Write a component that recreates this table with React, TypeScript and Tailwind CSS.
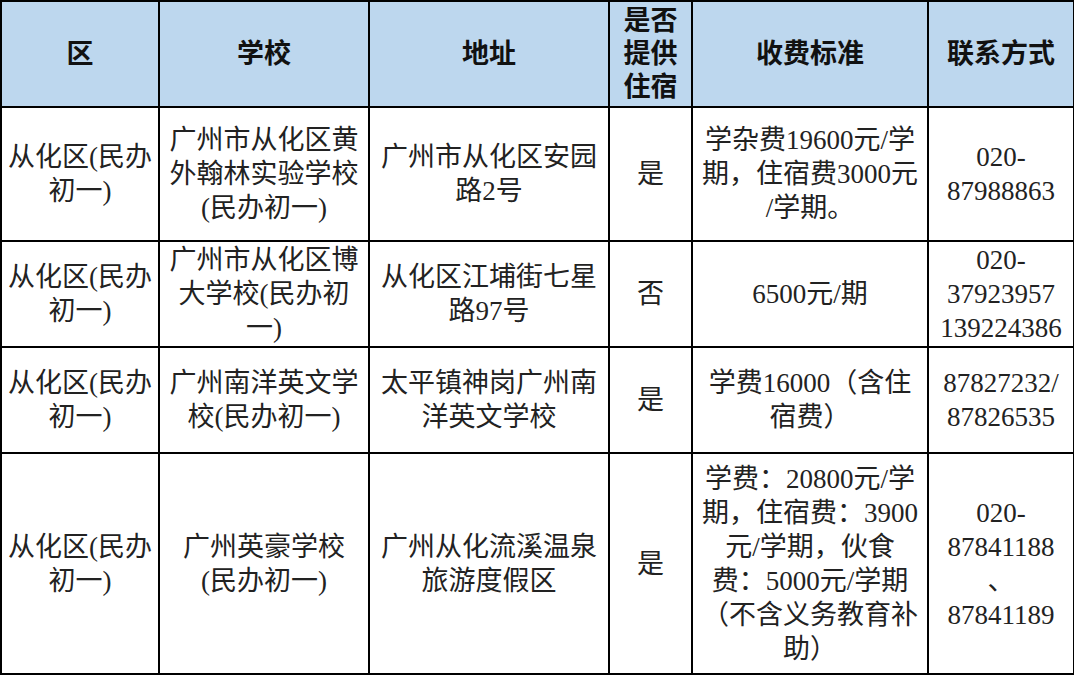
import React from 'react'

// each cell is a list of lines, broken the same way as the spreadsheet shot
type Row = { h: string; cells: string[][] }

const headers: string[][] = [
  ['区'],
  ['学校'],
  ['地址'],
  ['是否', '提供', '住宿'],
  ['收费标准'],
  ['联系方式'],
]

const rows: Row[] = [
  {
    h: 'h-[134px]',
    cells: [
      ['从化区(民办', '初一)'],
      ['广州市从化区黄', '外翰林实验学校', '(民办初一)'],
      ['广州市从化区安园', '路2号'],
      ['是'],
      ['学杂费19600元/学', '期，住宿费3000元', '/学期。'],
      ['020-', '87988863'],
    ],
  },
  {
    h: 'h-[106px]',
    cells: [
      ['从化区(民办', '初一)'],
      ['广州市从化区博', '大学校(民办初', '一)'],
      ['从化区江埔街七星', '路97号'],
      ['否'],
      ['6500元/期'],
      ['020-', '37923957', '139224386'],
    ],
  },
  {
    h: 'h-[106px]',
    cells: [
      ['从化区(民办', '初一)'],
      ['广州南洋英文学', '校(民办初一)'],
      ['太平镇神岗广州南', '洋英文学校'],
      ['是'],
      ['学费16000（含住', '宿费）'],
      ['87827232/', '87826535'],
    ],
  },
  {
    h: 'h-[221px]',
    cells: [
      ['从化区(民办', '初一)'],
      ['广州英豪学校', '(民办初一)'],
      ['广州从化流溪温泉', '旅游度假区'],
      ['是'],
      ['学费：20800元/学', '期，住宿费：3900', '元/学期，伙食', '费：5000元/学期', '（不含义务教育补', '助）'],
      ['020-', '87841188', '、', '87841189'],
    ],
  },
]

function Lines({ lines }: { lines: string[] }) {
  return (
    <>
      {lines.map((l, i) => (
        <div key={i} className="whitespace-nowrap">
          {l}
        </div>
      ))}
    </>
  )
}

export default function App() {
  return (
    <div className="w-[1074px] h-[675px] bg-white overflow-hidden font-[Liberation_Serif,Noto_Sans_CJK_SC,serif]">
      <table className="table-fixed border-collapse w-[1073px] text-[27px] text-center font-[Liberation_Serif,Noto_Sans_CJK_SC,serif]">
        <colgroup>
          <col className="w-[158px]" />
          <col className="w-[210px]" />
          <col className="w-[240px]" />
          <col className="w-[83px]" />
          <col className="w-[236px]" />
          <col className="w-[146px]" />
        </colgroup>
        <thead>
          <tr className="h-[106px] bg-[#bdd7ee]">
            {headers.map((lines, i) => (
              <th
                key={i}
                className="border-2 border-black p-0 align-middle font-bold leading-[33px] text-[#111]"
              >
                <Lines lines={lines} />
              </th>
            ))}
          </tr>
        </thead>
        <tbody>
          {rows.map((row, r) => (
            <tr key={r} className={row.h}>
              {row.cells.map((lines, c) => (
                <td
                  key={c}
                  className="border-2 border-black p-0 align-middle font-normal leading-[34px] text-[#222]"
                >
                  <Lines lines={lines} />
                </td>
              ))}
            </tr>
          ))}
        </tbody>
      </table>
    </div>
  )
}
